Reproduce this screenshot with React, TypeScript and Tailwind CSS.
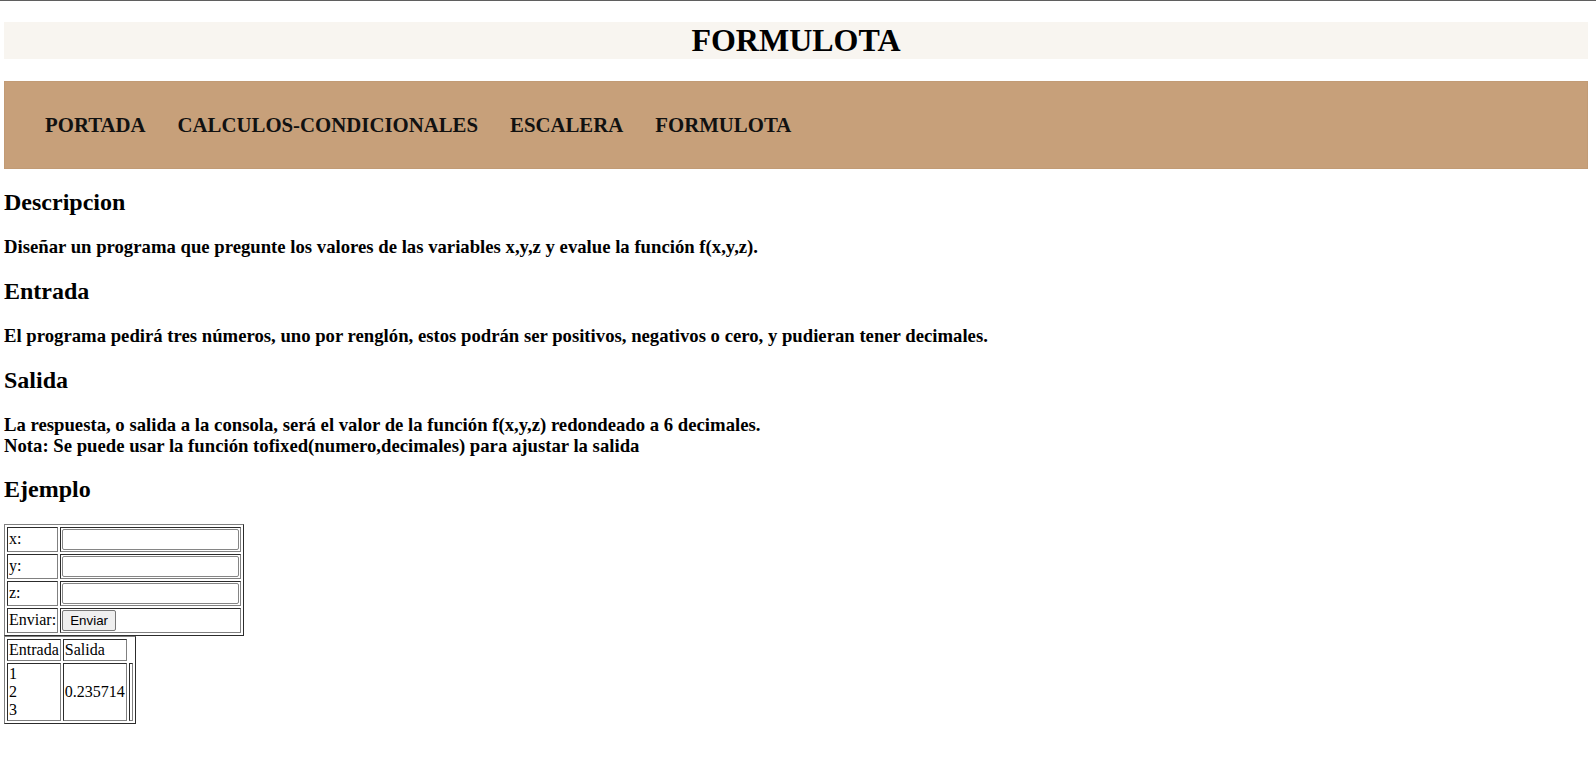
const navItems = ["PORTADA", "CALCULOS-CONDICIONALES", "ESCALERA", "FORMULOTA"];

const cell = "border border-[gray] [border-style:inset] p-[1px]";

const FieldRow = ({ label }: { label: string }) => (
  <tr>
    <td className={cell}>{label}</td>
    <td className={cell}>
      <input
        type="text"
        className="block w-[177px] h-[21px] rounded-[2px] border border-[#858585] bg-white px-[2px] text-[13.33px] font-['Liberation_Sans',sans-serif]"
      />
    </td>
  </tr>
);

const App = () => {
  return (
    <div className="min-h-screen bg-white text-black font-['Liberation_Serif',serif]">
      <div className="h-px bg-[#5f5f5f]" />
      <div className="ml-[4px] mr-[8px]">
        <h1 className="mt-[21px] bg-[#f8f5f0] text-center text-[32px] font-bold leading-[37px]">
          FORMULOTA
        </h1>

        <nav className="mt-[22px] h-[88px] border border-[#c29b75] bg-[#c7a07a] pl-[40px] flex items-center">
          <ul className="flex gap-[32px]">
            {navItems.map((item) => (
              <li key={item} className="text-[20.8px] font-bold leading-[24px] text-[#111]">
                {item}
              </li>
            ))}
          </ul>
        </nav>

        <h2 className="my-[19.9px] text-[24px] font-bold leading-[27.6px]">Descripcion</h2>
        <h3 className="my-[18.7px] text-[18.72px] font-bold leading-[21.5px]">
          Diseñar un programa que pregunte los valores de las variables x,y,z y evalue la función f(x,y,z).
        </h3>

        <h2 className="my-[19.9px] text-[24px] font-bold leading-[27.6px]">Entrada</h2>
        <h3 className="my-[18.7px] text-[18.72px] font-bold leading-[21.5px]">
          El programa pedirá tres números, uno por renglón, estos podrán ser positivos, negativos o cero, y pudieran tener decimales.
        </h3>

        <h2 className="my-[19.9px] text-[24px] font-bold leading-[27.6px]">Salida</h2>
        <h3 className="my-[18.7px] text-[18.72px] font-bold leading-[21px]">
          La respuesta, o salida a la consola, será el valor de la función f(x,y,z) redondeado a 6 decimales.
          <br />
          Nota: Se puede usar la función tofixed(numero,decimales) para ajustar la salida
        </h3>

        <h2 className="my-[19.9px] text-[24px] font-bold leading-[27.6px]">Ejemplo</h2>

        <table className="border-separate border-spacing-[2px] border border-[gray] [border-style:outset] text-[16px] leading-[18px]">
          <tbody>
            <FieldRow label="x:" />
            <FieldRow label="y:" />
            <FieldRow label="z:" />
            <tr>
              <td className={cell}>Enviar:</td>
              <td className={cell}>
                <button className="block w-[54px] h-[21px] rounded-[2px] border border-[#767676] bg-[#efefef] text-[13.33px] leading-[15px] font-['Liberation_Sans',sans-serif]">
                  Enviar
                </button>
              </td>
            </tr>
          </tbody>
        </table>

        <table className="border-separate border-spacing-[2px] border border-[gray] [border-style:outset] text-[16px] leading-[18px]">
          <tbody>
            <tr>
              <td className={cell}>Entrada</td>
              <td className={cell}>Salida</td>
            </tr>
            <tr>
              <td className={cell}>
                1
                <br />
                2
                <br />
                3
              </td>
              <td className={cell}>0.235714</td>
              <td className={cell}></td>
            </tr>
          </tbody>
        </table>
      </div>
    </div>
  );
};

export default App;
